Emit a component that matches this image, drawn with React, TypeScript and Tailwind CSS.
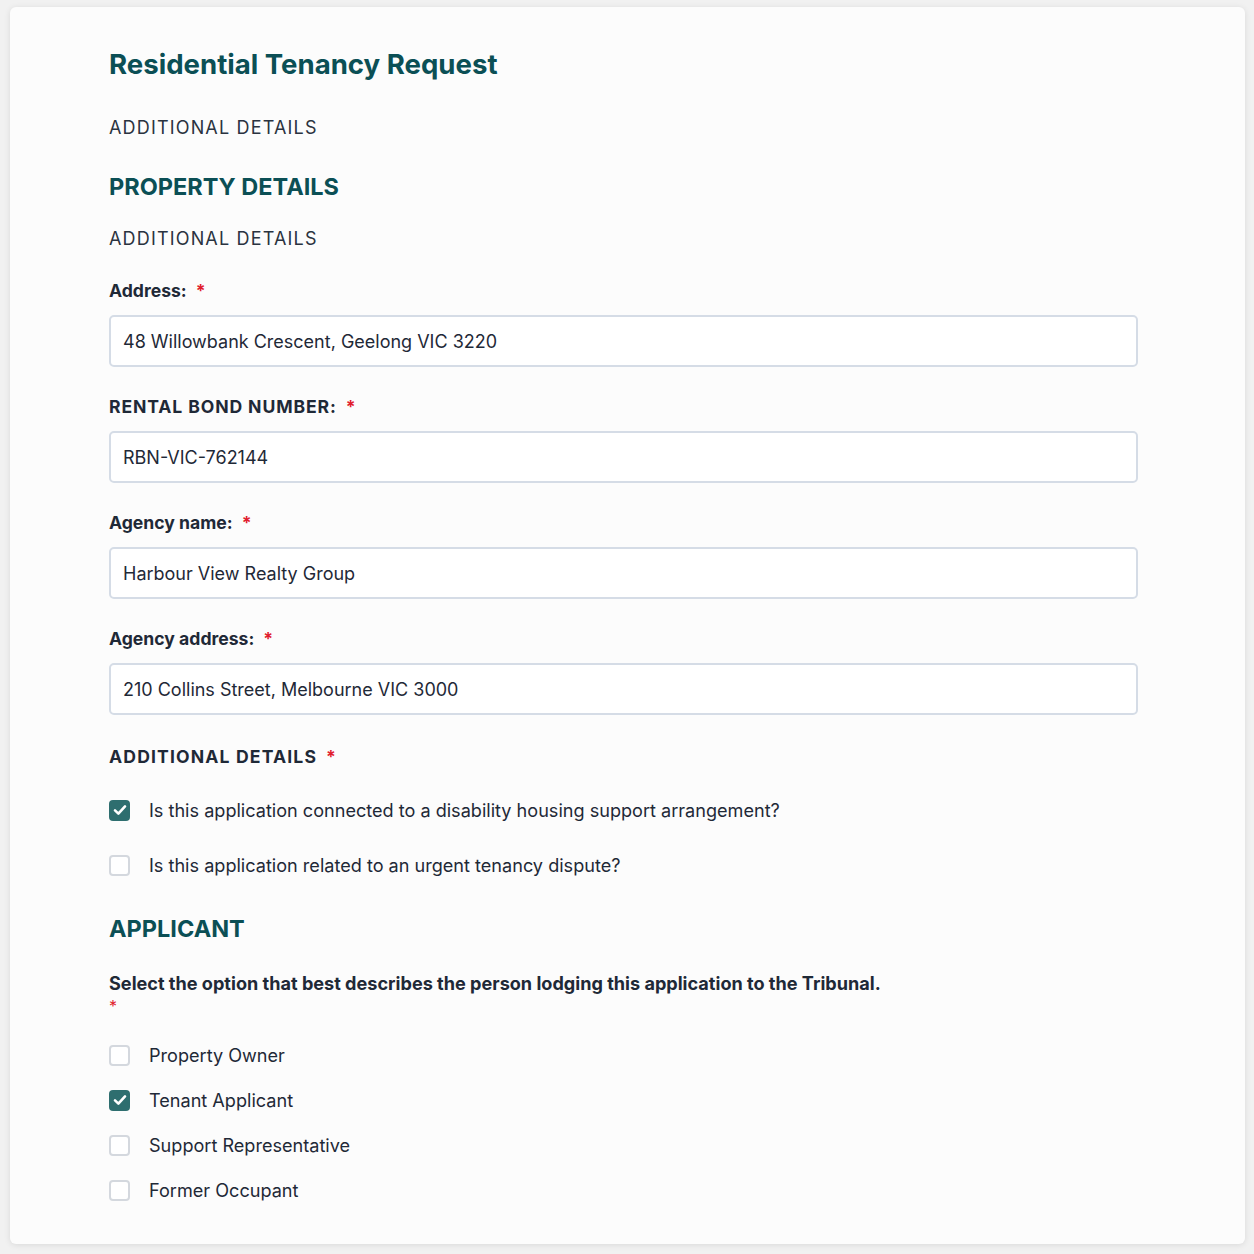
import React from "react";

const font = { fontFamily: "Inter, 'Noto Sans', sans-serif" };

function Req() {
  return <span className="ml-[9px] text-[#e11d2e]">*</span>;
}

function Field({ label, value, upper }: { label: string; value: string; upper?: boolean }) {
  return (
    <div className="flex flex-col">
      <div className={`text-[17.6px] font-bold text-[#1f2937] leading-[24px] ${upper ? "tracking-[0.05em]" : ""}`}>
        {label}
        <Req />
      </div>
      <div className="mt-[12px] h-[52px] rounded-[5px] border-2 border-[#d5dce6] bg-white px-[12px] flex items-center text-[18px] text-[#1f2937]">
        {value}
      </div>
    </div>
  );
}

function Check({ checked, label }: { checked?: boolean; label: string }) {
  return (
    <div className="flex items-center gap-[19px] h-[28px]">
      {checked ? (
        <div className="w-[21px] h-[21px] rounded-[4px] bg-[#2e6e6f] flex items-center justify-center">
          <svg width="16" height="16" viewBox="0 0 16 16" fill="none">
            <path d="M3 8.4 L6.4 11.6 L13 4.4" stroke="white" strokeWidth="2.6" strokeLinecap="round" strokeLinejoin="round" />
          </svg>
        </div>
      ) : (
        <div className="w-[21px] h-[21px] rounded-[4px] border-2 border-[#d4d8de] bg-white" />
      )}
      <span className="text-[18.1px] leading-[28px] text-[#1f2937]">{label}</span>
    </div>
  );
}

export default function App() {
  return (
    <div className="min-h-[1254px] bg-[#f1f1f1] pt-[7px] pl-[10px] pr-[9px] pb-[10px]" style={font}>
      <div className="rounded-[6px] bg-[#fcfcfc] shadow-[0_1px_6px_rgba(0,0,0,0.10)] pl-[99px] pr-[107px] pt-[40px] pb-[40px] h-[1237px]">
        <h1 className="text-[27.6px] leading-[34px] font-bold text-[#0b4f55]">Residential Tenancy Request</h1>
        <div className="mt-[35px] text-[18px] leading-[24px] tracking-[0.065em] text-[#2a3340]">ADDITIONAL DETAILS</div>
        <h2 className="mt-[31px] text-[23.5px] leading-[32px] font-bold text-[#0b4f55]">PROPERTY DETAILS</h2>
        <div className="mt-[24px] text-[18px] leading-[24px] tracking-[0.065em] text-[#2a3340]">ADDITIONAL DETAILS</div>
        <div className="mt-[28px] flex flex-col gap-[28px]">
          <Field label="Address:" value="48 Willowbank Crescent, Geelong VIC 3220" />
          <Field label="RENTAL BOND NUMBER:" value="RBN-VIC-762144" upper />
          <Field label="Agency name:" value="Harbour View Realty Group" />
          <Field label="Agency address:" value="210 Collins Street, Melbourne VIC 3000" />
        </div>
        <div className="mt-[30px] text-[17.6px] font-bold tracking-[0.065em] text-[#1f2937] leading-[24px]">
          ADDITIONAL DETAILS
          <Req />
        </div>
        <div className="mt-[27px] flex flex-col gap-[27px]">
          <Check checked label="Is this application connected to a disability housing support arrangement?" />
          <Check label="Is this application related to an urgent tenancy dispute?" />
        </div>
        <h2 className="mt-[34px] text-[23.5px] leading-[32px] font-bold text-[#0b4f55]">APPLICANT</h2>
        <div className="mt-[25px] text-[18.1px] font-bold text-[#1f2937] leading-[26px]">
          Select the option that best describes the person lodging this application to the Tribunal.
        </div>
        <div className="text-[#e11d2e] leading-[20px] text-[16px]">*</div>
        <div className="mt-[25px] flex flex-col gap-[17px]">
          <Check label="Property Owner" />
          <Check checked label="Tenant Applicant" />
          <Check label="Support Representative" />
          <Check label="Former Occupant" />
        </div>
      </div>
    </div>
  );
}
